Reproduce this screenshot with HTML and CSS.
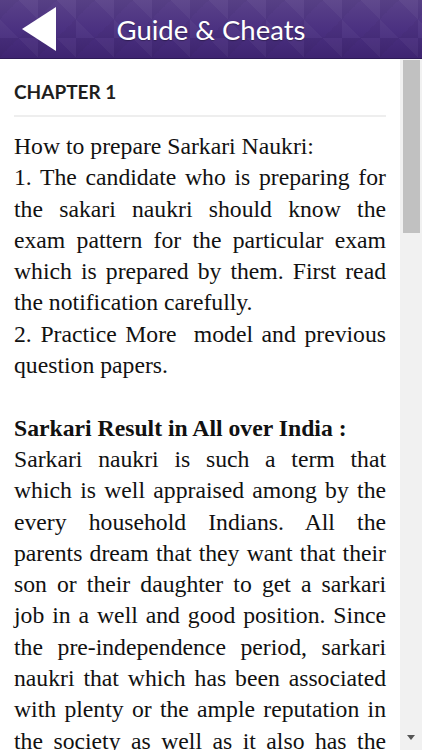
FILE: index.html
```html
<!DOCTYPE html>
<html>
<head>
<meta charset="utf-8">
<link rel="stylesheet" href="styles.css">
</head>
<body>
<header class="topbar">
  <svg class="back" width="36" height="46" viewBox="0 0 36 46"><polygon points="0,22 34,0 34,44" fill="#fff"/></svg>
  <h1 class="title">Guide &amp; Cheats</h1>
</header>
<div class="main">
  <div class="content">
    <h2 class="chapter">CHAPTER 1</h2>
    <hr class="divider">
    <div class="text">
      <p>How to prepare Sarkari Naukri:<br>
      1. The candidate who is preparing for the sakari naukri should know the exam pattern for the particular exam which is prepared by them. First read the notification carefully.<br>
      2. Practice More &nbsp;model and previous question papers.</p>
      <p class="gap"><b>Sarkari Result in All over India :</b><br>
      Sarkari naukri is such a term that which is well appraised among by the every household Indians. All the parents dream that they want that their son or their daughter to get a sarkari job in a well and good position. Since the pre-independence period, sarkari naukri that which has been associated with plenty or the ample reputation in the society as well as it also has the great importance in the present day.</p>
    </div>
  </div>
  <div class="scrollbar">
    <div class="thumb"></div>
    <div class="track"></div>
    <div class="arrow"></div>
  </div>
</div>
</body>
</html>
```
FILE: styles.css
```css
html, body {
  margin: 0;
  padding: 0;
  height: 750px;
  overflow: hidden;
  background: #fff;
}
.topbar {
  height: 58px;
  background-color: #4a3080;
  background-image:
    linear-gradient(45deg, rgba(255,255,255,0.035) 25%, transparent 25%, transparent 75%, rgba(255,255,255,0.035) 75%),
    linear-gradient(-45deg, rgba(0,0,0,0.03) 25%, transparent 25%, transparent 75%, rgba(0,0,0,0.03) 75%),
    linear-gradient(180deg, #5a4289 0%, #4b3181 50%, #3e2471 100%);
  background-size: 38px 38px, 38px 38px, 100% 100%;
  border-bottom: 1px solid #2e1a57;
  display: flex;
  align-items: center;
}
.back {
  margin-left: 22px;
  margin-top: 2px;
}
.title {
  margin: 0 58px 0 0;
  flex: 1;
  text-align: center;
  font-family: Lato, "Open Sans", sans-serif;
  font-weight: 400;
  font-size: 27.5px;
  color: #fff;
  text-shadow: 0 1px 1px rgba(0,0,0,0.3);
}
.main {
  display: flex;
  height: 691px;
  overflow: hidden;
}
.content {
  width: 372px;
  padding: 0 14px;
  overflow: hidden;
}
.chapter {
  margin: 20px 0 0 0;
  font-family: Lato, "Open Sans", sans-serif;
  font-weight: 700;
  font-size: 19px;
  line-height: 25px;
  color: #1e1e1e;
}
.divider {
  border: 0;
  border-top: 2px solid #eeeeee;
  margin: 11px 0 0 0;
}
.text {
  font-family: "Liberation Serif", "Times New Roman", serif;
  font-size: 23.7px;
  line-height: 31.3px;
  color: #111;
  text-align: justify;
  margin-top: 14px;
}
.text p {
  margin: 0;
}
.text p.gap {
  margin-top: 31.3px;
}
.scrollbar {
  width: 22px;
  margin-left: auto;
  background: #f1f1f1;
  display: flex;
  flex-direction: column;
  align-items: center;
}
.thumb {
  width: 17px;
  height: 173px;
  background: #c1c1c1;
  margin-top: 1px;
}
.track {
  flex: 1;
}
.arrow {
  width: 0;
  height: 0;
  border-left: 4px solid transparent;
  border-right: 4px solid transparent;
  border-top: 5px solid #555;
  margin-bottom: 10px;
}
```
